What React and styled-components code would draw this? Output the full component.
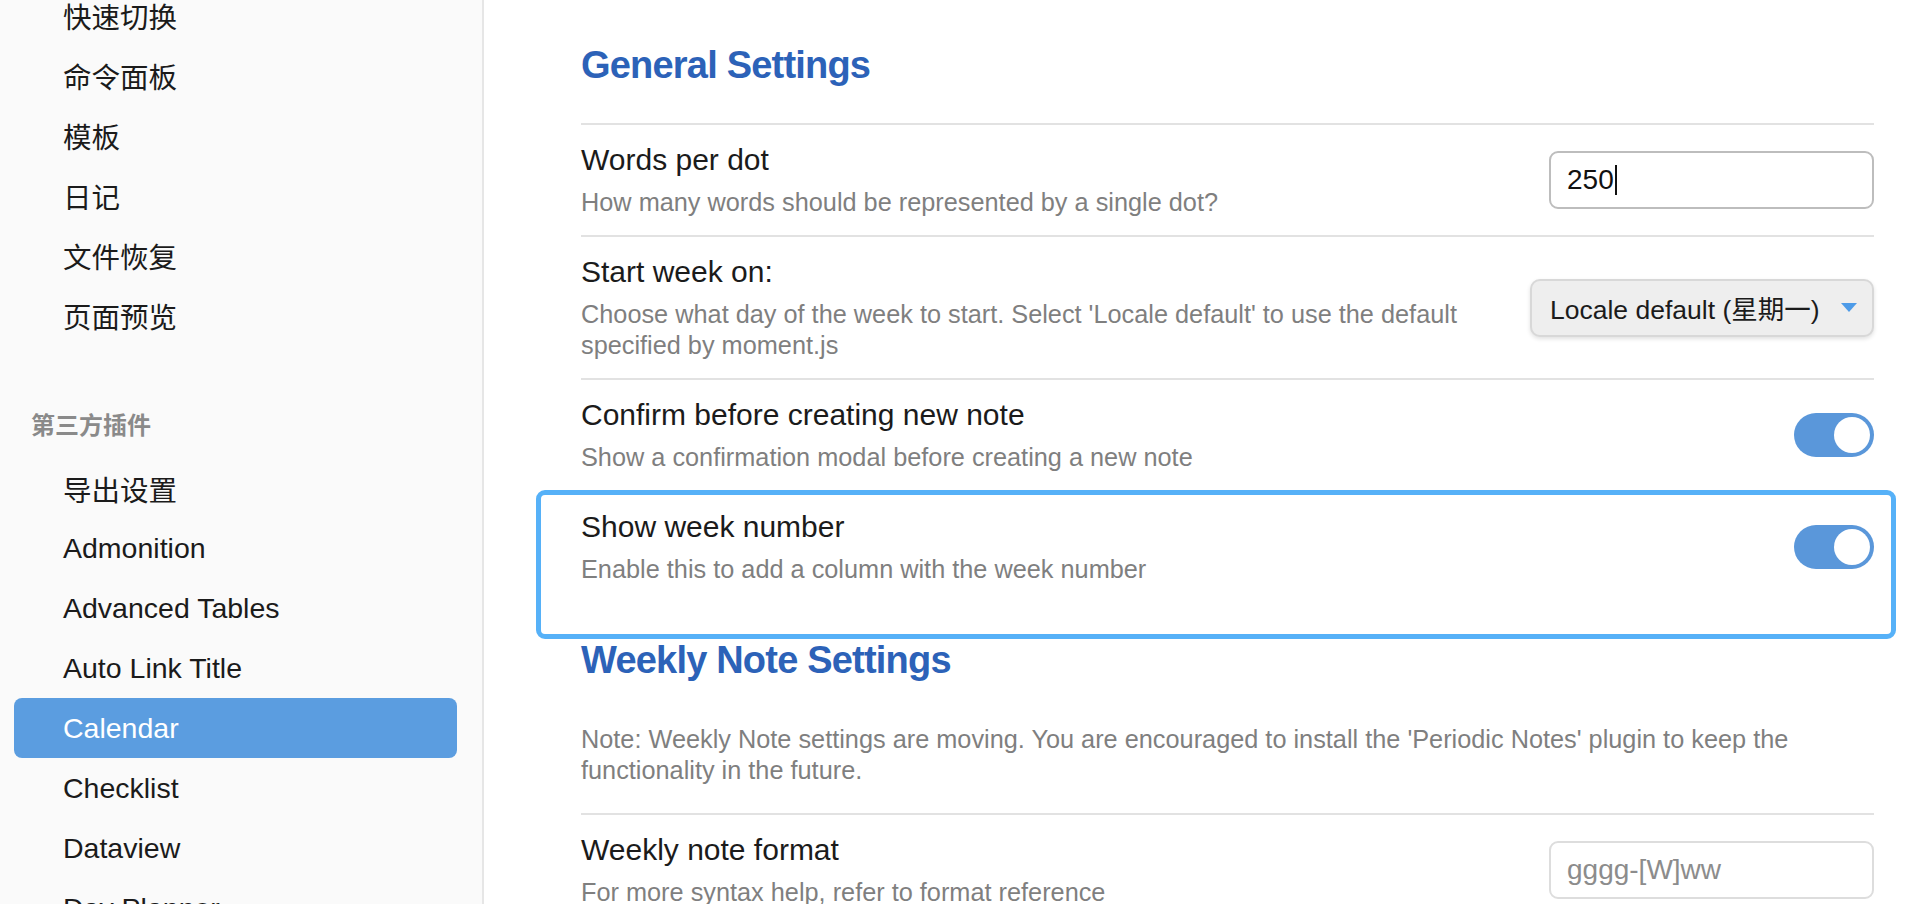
import styled, { createGlobalStyle } from "styled-components";

const GlobalStyle = createGlobalStyle`
  html, body {
    margin: 0;
    padding: 0;
    background: #ffffff;
    overflow: hidden;
  }
  body {
    font-family: "Liberation Sans", "Noto Sans CJK SC", sans-serif;
    color: #1b1b1b;
  }
`;

const Layout = styled.div`
  display: flex;
  width: 1906px;
  height: 904px;
  overflow: hidden;
`;

const Sidebar = styled.nav`
  width: 482px;
  flex-shrink: 0;
  background: #fafafa;
  border-right: 2px solid #e6e6e6;
  overflow: hidden;
`;

const NavList = styled.div`
  display: flex;
  flex-direction: column;
  margin-top: -15px;
  padding: 0 25px 0 14px;
`;

const NavItem = styled.div`
  height: 60px;
  display: flex;
  align-items: center;
  padding-left: 49px;
  font-size: 28.5px;
  border-radius: 8px;
  white-space: nowrap;
  color: ${(props) => (props.$active ? "#ffffff" : "#1b1b1b")};
  background: ${(props) => (props.$active ? "#5b9de0" : "transparent")};
`;

const NavGroup = styled.div`
  margin: 66px 0 17px 17px;
  line-height: 30px;
  font-size: 24px;
  font-weight: 700;
  color: #8a8a8a;
`;

const Main = styled.main`
  flex: 1;
  padding: 44px 32px 0 97px;
  overflow: hidden;
`;

const Heading = styled.h3`
  margin: ${(props) => (props.$first ? "0 0 37px" : "37px 0 0")};
  font-size: 38px;
  line-height: 42px;
  font-weight: 700;
  letter-spacing: -0.8px;
  color: #2c62b8;
`;

const Note = styled.p`
  margin: 43px 0 27px;
  font-size: 25.3px;
  line-height: 31px;
  color: #7f7f7f;
`;

const Item = styled.div`
  position: relative;
  display: flex;
  align-items: center;
  padding: 17px 0;
  border-top: 2px solid #e2e2e2;
`;

const Info = styled.div`
  flex: 1;
  margin-right: 24px;
`;

const Name = styled.div`
  font-size: 30px;
  line-height: 36px;
  color: #1b1b1b;
`;

const Desc = styled.div`
  margin-top: 9px;
  font-size: 25.3px;
  line-height: 31px;
  color: #7f7f7f;
`;

const Highlight = styled.div`
  position: absolute;
  top: -2px;
  left: -45px;
  right: -22px;
  bottom: -37px;
  border: 5px solid #56b1f8;
  border-radius: 9px;
  pointer-events: none;
`;

const TextBox = styled.div`
  box-sizing: border-box;
  width: 325px;
  height: 58px;
  display: flex;
  align-items: center;
  padding: 0 16px;
  border: 2px solid ${(props) => (props.$focused ? "#bdbdbd" : "#dddddd")};
  border-radius: 9px;
  background: #ffffff;
  font-size: 28px;
  color: ${(props) => (props.$placeholder ? "#8c8c8c" : "#111111")};
`;

const Caret = styled.span`
  display: inline-block;
  width: 2px;
  height: 30px;
  margin-left: 1px;
  background: #111111;
`;

const Select = styled.div`
  box-sizing: border-box;
  width: 344px;
  height: 58px;
  display: flex;
  align-items: center;
  justify-content: space-between;
  padding: 0 15px 0 18px;
  border: 2px solid #d8d8d8;
  border-radius: 10px;
  background: #eeeeee;
  box-shadow: 0 2px 4px rgba(0, 0, 0, 0.12);
  font-size: 26.5px;
  color: #1b1b1b;
  white-space: nowrap;
`;

const Toggle = styled.div`
  position: relative;
  width: 80px;
  height: 44px;
  border-radius: 22px;
  background: #5a97da;
  flex-shrink: 0;
`;

const Knob = styled.span`
  position: absolute;
  top: 4px;
  right: 4px;
  width: 36px;
  height: 36px;
  border-radius: 50%;
  background: #ffffff;
`;

const Arrow = () => (
  <svg width="16" height="9" viewBox="0 0 16 9">
    <path d="M0 0 L16 0 L8 9 Z" fill="#4d9be8" />
  </svg>
);

const builtIn = ["快速切换", "命令面板", "模板", "日记", "文件恢复", "页面预览"];
const plugins = [
  "导出设置",
  "Admonition",
  "Advanced Tables",
  "Auto Link Title",
  "Calendar",
  "Checklist",
  "Dataview",
  "Day Planner",
];

const Setting = ({ name, desc, children, highlight }) => (
  <Item>
    <Info>
      <Name>{name}</Name>
      <Desc>{desc}</Desc>
    </Info>
    {children}
    {highlight && <Highlight />}
  </Item>
);

const App = () => {
  return (
    <Layout>
      <GlobalStyle />
      <Sidebar>
        <NavList>
          {builtIn.map((label) => (
            <NavItem key={label}>{label}</NavItem>
          ))}
          <NavGroup>第三方插件</NavGroup>
          {plugins.map((label) => (
            <NavItem key={label} $active={label === "Calendar"}>
              {label}
            </NavItem>
          ))}
        </NavList>
      </Sidebar>
      <Main>
        <Heading $first>General Settings</Heading>
        <Setting
          name="Words per dot"
          desc="How many words should be represented by a single dot?"
        >
          <TextBox $focused>
            250
            <Caret />
          </TextBox>
        </Setting>
        <Setting
          name="Start week on:"
          desc="Choose what day of the week to start. Select 'Locale default' to use the default specified by moment.js"
        >
          <Select>
            <span>Locale default (星期一)</span>
            <Arrow />
          </Select>
        </Setting>
        <Setting
          name="Confirm before creating new note"
          desc="Show a confirmation modal before creating a new note"
        >
          <Toggle>
            <Knob />
          </Toggle>
        </Setting>
        <Setting
          name="Show week number"
          desc="Enable this to add a column with the week number"
          highlight
        >
          <Toggle>
            <Knob />
          </Toggle>
        </Setting>
        <Heading>Weekly Note Settings</Heading>
        <Note>
          Note: Weekly Note settings are moving. You are encouraged to install
          the 'Periodic Notes' plugin to keep the functionality in the future.
        </Note>
        <Setting
          name="Weekly note format"
          desc="For more syntax help, refer to format reference"
        >
          <TextBox $placeholder>gggg-[W]ww</TextBox>
        </Setting>
      </Main>
    </Layout>
  );
};

export default App;
